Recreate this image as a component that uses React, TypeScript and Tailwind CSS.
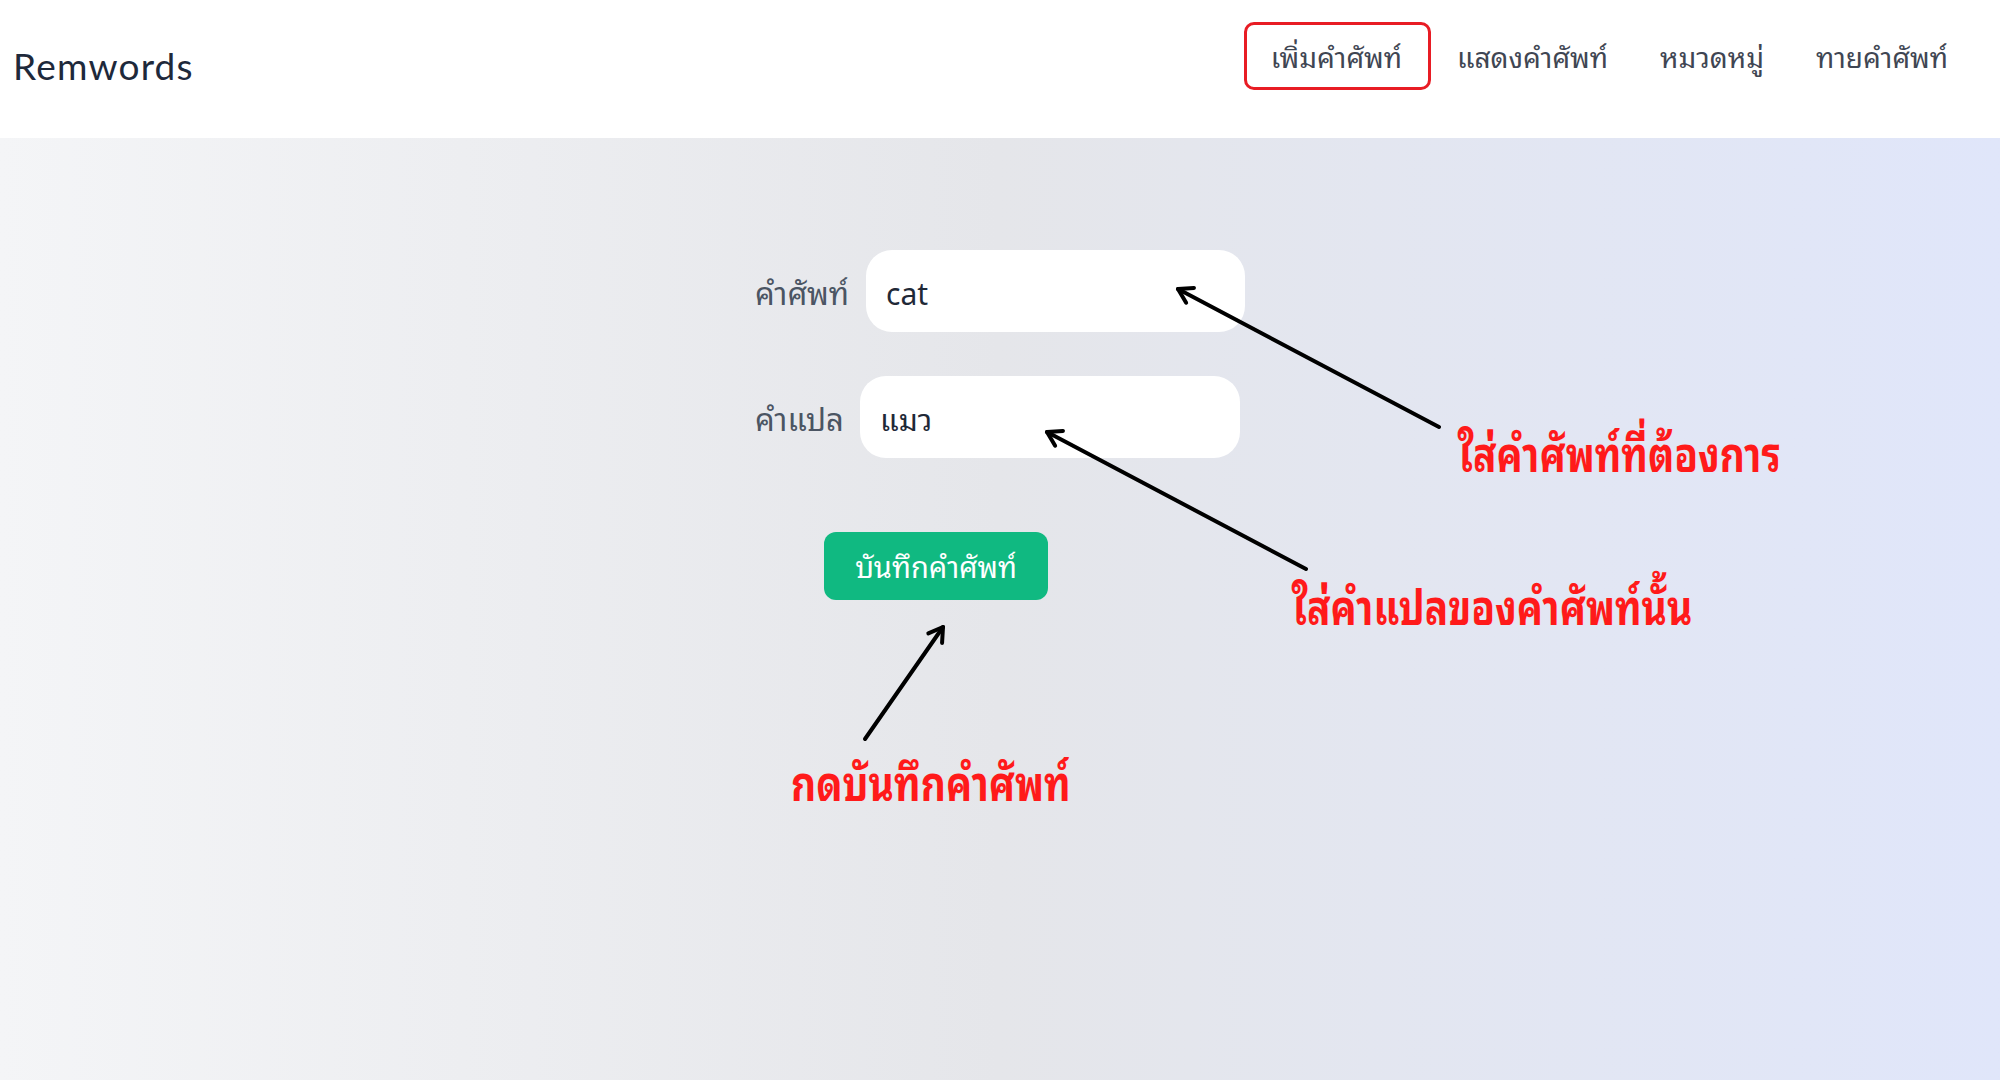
import React from "react";

const thai = '"Noto Sans Thai Looped", "Noto Sans", "Noto Sans Thai", sans-serif';

function Arrow({ x1, y1, x2, y2 }: { x1: number; y1: number; x2: number; y2: number }) {
  const ang = Math.atan2(y2 - y1, x2 - x1);
  const len = 16;
  const spread = 0.55;
  const a1x = x2 - len * Math.cos(ang - spread);
  const a1y = y2 - len * Math.sin(ang - spread);
  const a2x = x2 - len * Math.cos(ang + spread);
  const a2y = y2 - len * Math.sin(ang + spread);
  return (
    <g stroke="#000" strokeWidth={4} fill="none" strokeLinecap="round" strokeLinejoin="round">
      <line x1={x1} y1={y1} x2={x2} y2={y2} />
      <polyline points={`${a1x},${a1y} ${x2},${y2} ${a2x},${a2y}`} />
    </g>
  );
}

export default function App() {
  return (
    <div className="relative w-[2000px] h-[1080px] overflow-hidden" style={{ fontFamily: thai }}>
      <header className="h-[138px] bg-white flex items-center justify-between pl-[13px] pr-[26px]">
        <div className="text-[37px] text-[#1e293b] tracking-[1.2px] font-['Lato'] mt-[-6px]">Remwords</div>
        <nav className="flex items-center text-[28px] text-[#3f4653] mt-[-26px]">
          <div className="h-[68px] pl-[24px] pr-[26px] flex items-center border-[3px] border-[#e81c24] rounded-[10px]">เพิ่มคำศัพท์</div>
          <div className="h-[68px] px-[26px] flex items-center">แสดงคำศัพท์</div>
          <div className="h-[68px] px-[26px] flex items-center">หมวดหมู่</div>
          <div className="h-[68px] px-[26px] flex items-center">ทายคำศัพท์</div>
        </nav>
      </header>
      <main className="h-[942px] bg-gradient-to-r from-[#f4f5f7] via-[#e5e6ea] to-[#e0e6fa] pt-[112px]">
        <div className="mx-auto w-[490px] flex flex-col">
          <div className="flex items-center gap-[15px]">
            <label className="w-[96px] text-[31px] text-[#4b5563] whitespace-nowrap">คำศัพท์</label>
            <div className="w-[379px] h-[82px] bg-white rounded-[26px] flex items-center px-[20px] text-[30px] text-[#1f2937]">
              cat
            </div>
          </div>
          <div className="flex items-center gap-[14px] mt-[44px]">
            <label className="w-[91px] text-[31px] text-[#4b5563] whitespace-nowrap">คำแปล</label>
            <div className="w-[380px] h-[82px] bg-white rounded-[26px] flex items-center px-[20px] text-[30px] text-[#1f2937]">
              แมว
            </div>
          </div>
          <button className="ml-[69px] mt-[74px] w-[224px] h-[68px] rounded-[12px] bg-[#10b981] text-white text-[29px] flex items-center justify-center">
            บันทึกคำศัพท์
          </button>
        </div>
      </main>

      <svg className="absolute inset-0 pointer-events-none" width={2000} height={1080}>
        <Arrow x1={1439} y1={427} x2={1178} y2={289} />
        <Arrow x1={1306} y1={569} x2={1047} y2={432} />
        <Arrow x1={865} y1={739} x2={943} y2={627} />
      </svg>

      <div className="absolute left-[1458px] top-[427px] text-[48px] font-bold text-[#ff1a1a] leading-none whitespace-nowrap scale-x-[0.81] origin-left">
        ใส่คำศัพท์ที่ต้องการ
      </div>
      <div className="absolute left-[1292px] top-[580px] text-[48px] font-bold text-[#ff1a1a] leading-none whitespace-nowrap scale-x-[0.81] origin-left">
        ใส่คำแปลของคำศัพท์นั้น
      </div>
      <div className="absolute left-[791px] top-[756px] text-[48px] font-bold text-[#ff1a1a] leading-none whitespace-nowrap scale-x-[0.81] origin-left">
        กดบันทึกคำศัพท์
      </div>
    </div>
  );
}
